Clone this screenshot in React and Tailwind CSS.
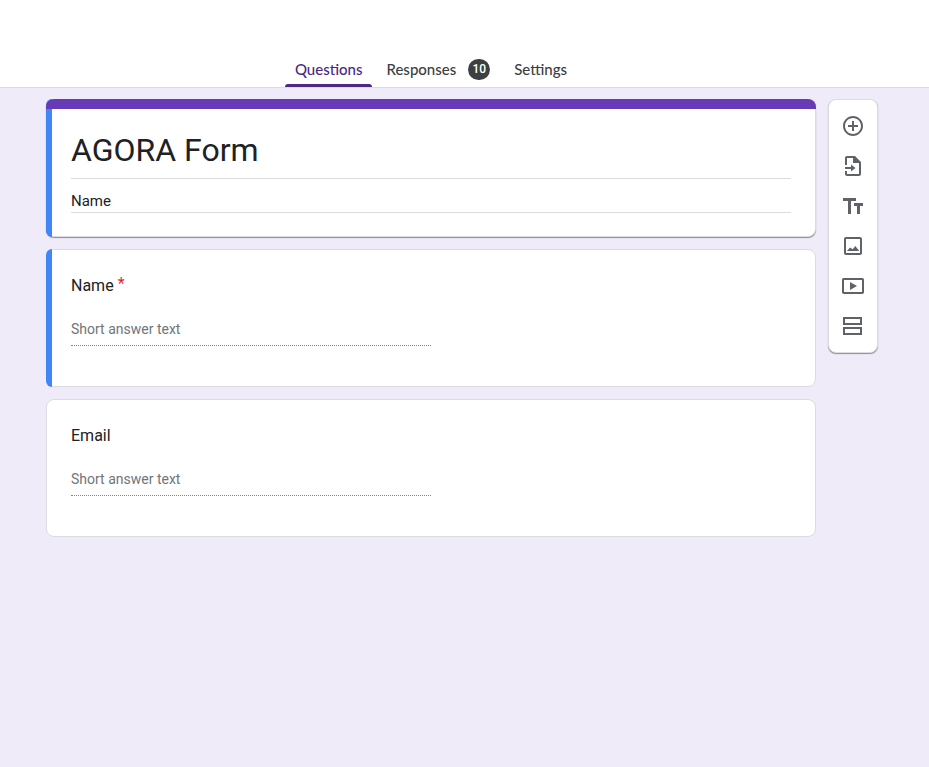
const tabs = [
  { label: 'Questions', active: true },
  { label: 'Responses', count: 10 },
  { label: 'Settings' },
];

const tools = [
  {
    label: 'Add question',
    d: 'M13 7h-2v4H7v2h4v4h2v-4h4v-2h-4V7zm-1-5C6.48 2 2 6.48 2 12s4.48 10 10 10 10-4.48 10-10S17.52 2 12 2zm0 18c-4.41 0-8-3.59-8-8s3.59-8 8-8 8 3.59 8 8-3.59 8-8 8z',
  },
  {
    label: 'Import questions',
    d: 'M14 2H6c-1.1 0-2 .9-2 2v7h2V4h6v5h6v11H6v-3H4v3c0 1.1.9 2 2 2h12c1.1 0 2-.9 2-2V8zM4 13v2h6v2.5l4.5-3.5L10 10.5V13z',
  },
  {
    label: 'Add title and description',
    d: 'M2 4v3h5v13h3V7h5V4zM13 9v3h3v8h3v-8h3V9z',
  },
  {
    label: 'Add image',
    d: 'M19 3H5c-1.1 0-2 .9-2 2v14c0 1.1.9 2 2 2h14c1.1 0 2-.9 2-2V5c0-1.1-.9-2-2-2zm0 16H5V5h14zM6 17h12.300l-4-5-2.600 3.300L9 13.400z',
  },
  {
    label: 'Add video',
    d: 'M21 4H3c-1.100 0-2 .7-2 1.700v12.600c0 1 .9 1.700 2 1.700h18c1.100 0 2-.7 2-1.700V5.700c0-1-.9-1.700-2-1.700zm0 14H3V6h18zM9 8v8l7-4z',
  },
  {
    label: 'Add section',
    d: 'M2 3v8h19V3zm17 6H4V5h15zM2 13v8h19v-8zm17 6H4v-4h15z',
  },
];

function Tab({ label, active, count }) {
  return (
    <button
      type="button"
      role="tab"
      aria-selected={Boolean(active)}
      className={`relative flex h-9 items-center gap-3 px-3 font-['Lato',sans-serif] text-[15px] font-medium ${
        active ? 'text-[#4b2a85]' : 'text-[#3c4043]'
      }`}
    >
      {label}
      {count !== undefined && (
        <span className="flex h-[21px] min-w-[22px] items-center justify-center rounded-full bg-[#3c4043] font-['Roboto',sans-serif] text-xs text-white">
          {count}
        </span>
      )}
      {active && <span className="absolute inset-x-[2px] bottom-0 h-[3px] rounded-t-full bg-[#4b2a85]" />}
    </button>
  );
}

function QuestionCard({ id, title, required, selected }) {
  return (
    <section className="relative rounded-lg border border-[#dadce0] bg-white px-6 pt-6 pb-10">
      {selected && <span className="absolute -inset-y-px -left-px w-[6px] rounded-l-lg bg-[#4285f4]" />}
      <label htmlFor={id} className="flex h-6 items-center gap-1 text-base text-[#202124]">
        {title}
        {required && <span className="pb-1 text-[#d93025]">*</span>}
      </label>
      <input
        id={id}
        type="text"
        disabled
        placeholder="Short answer text"
        className="mt-4 block h-8 w-1/2 border-b border-dotted border-[#80868b] bg-transparent pb-[2px] text-sm placeholder:text-[#70757a]"
      />
    </section>
  );
}

export default function App() {
  return (
    <div className="min-h-screen bg-[#f0ebf8] font-['Roboto',sans-serif] text-[#202124]">
      <header className="flex justify-center border-b border-[#dadce0] bg-white pt-[51px] pr-[67px]">
        <nav role="tablist" aria-label="Form sections" className="flex">
          {tabs.map((tab) => (
            <Tab key={tab.label} {...tab} />
          ))}
        </nav>
      </header>

      <main className="flex items-start justify-center gap-3 pt-[11px] pr-[51px] pb-12 pl-[46px]">
        <form className="flex max-w-[770px] flex-1 flex-col gap-3">
          <section className="relative rounded-lg border border-[#dadce0] bg-white px-6 pt-6 pb-[23px] shadow-[0_1px_1px_rgba(0,0,0,0.4)]">
            <span className="absolute -inset-y-px -left-px w-[6px] rounded-l-lg bg-[#4285f4]" />
            <span className="absolute -inset-x-px -top-px h-[10px] rounded-t-lg bg-[#673ab7]" />
            <input
              type="text"
              aria-label="Form title"
              defaultValue="AGORA Form"
              className="block h-[55px] w-full border-b border-[#dadce0] bg-transparent pb-[2px] text-[32px] outline-none"
            />
            <input
              type="text"
              aria-label="Form description"
              defaultValue="Name"
              className="mt-3 block h-[22px] w-full border-b border-[#dadce0] bg-transparent text-[15px] outline-none"
            />
          </section>
          <QuestionCard id="question-name" title="Name" required selected />
          <QuestionCard id="question-email" title="Email" />
        </form>

        <aside
          aria-label="Form tools"
          className="flex w-[50px] flex-col items-center rounded-lg border border-[#dadce0] bg-white py-[6px] shadow-[0_1px_1px_rgba(0,0,0,0.4)]"
        >
          {tools.map((tool) => (
            <button
              key={tool.label}
              type="button"
              aria-label={tool.label}
              className="flex size-10 items-center justify-center text-[#5f6368]"
            >
              <svg viewBox="0 0 24 24" className="size-6" fill="currentColor" fillRule="evenodd" aria-hidden="true">
                <path d={tool.d} />
              </svg>
            </button>
          ))}
        </aside>
      </main>
    </div>
  );
}
